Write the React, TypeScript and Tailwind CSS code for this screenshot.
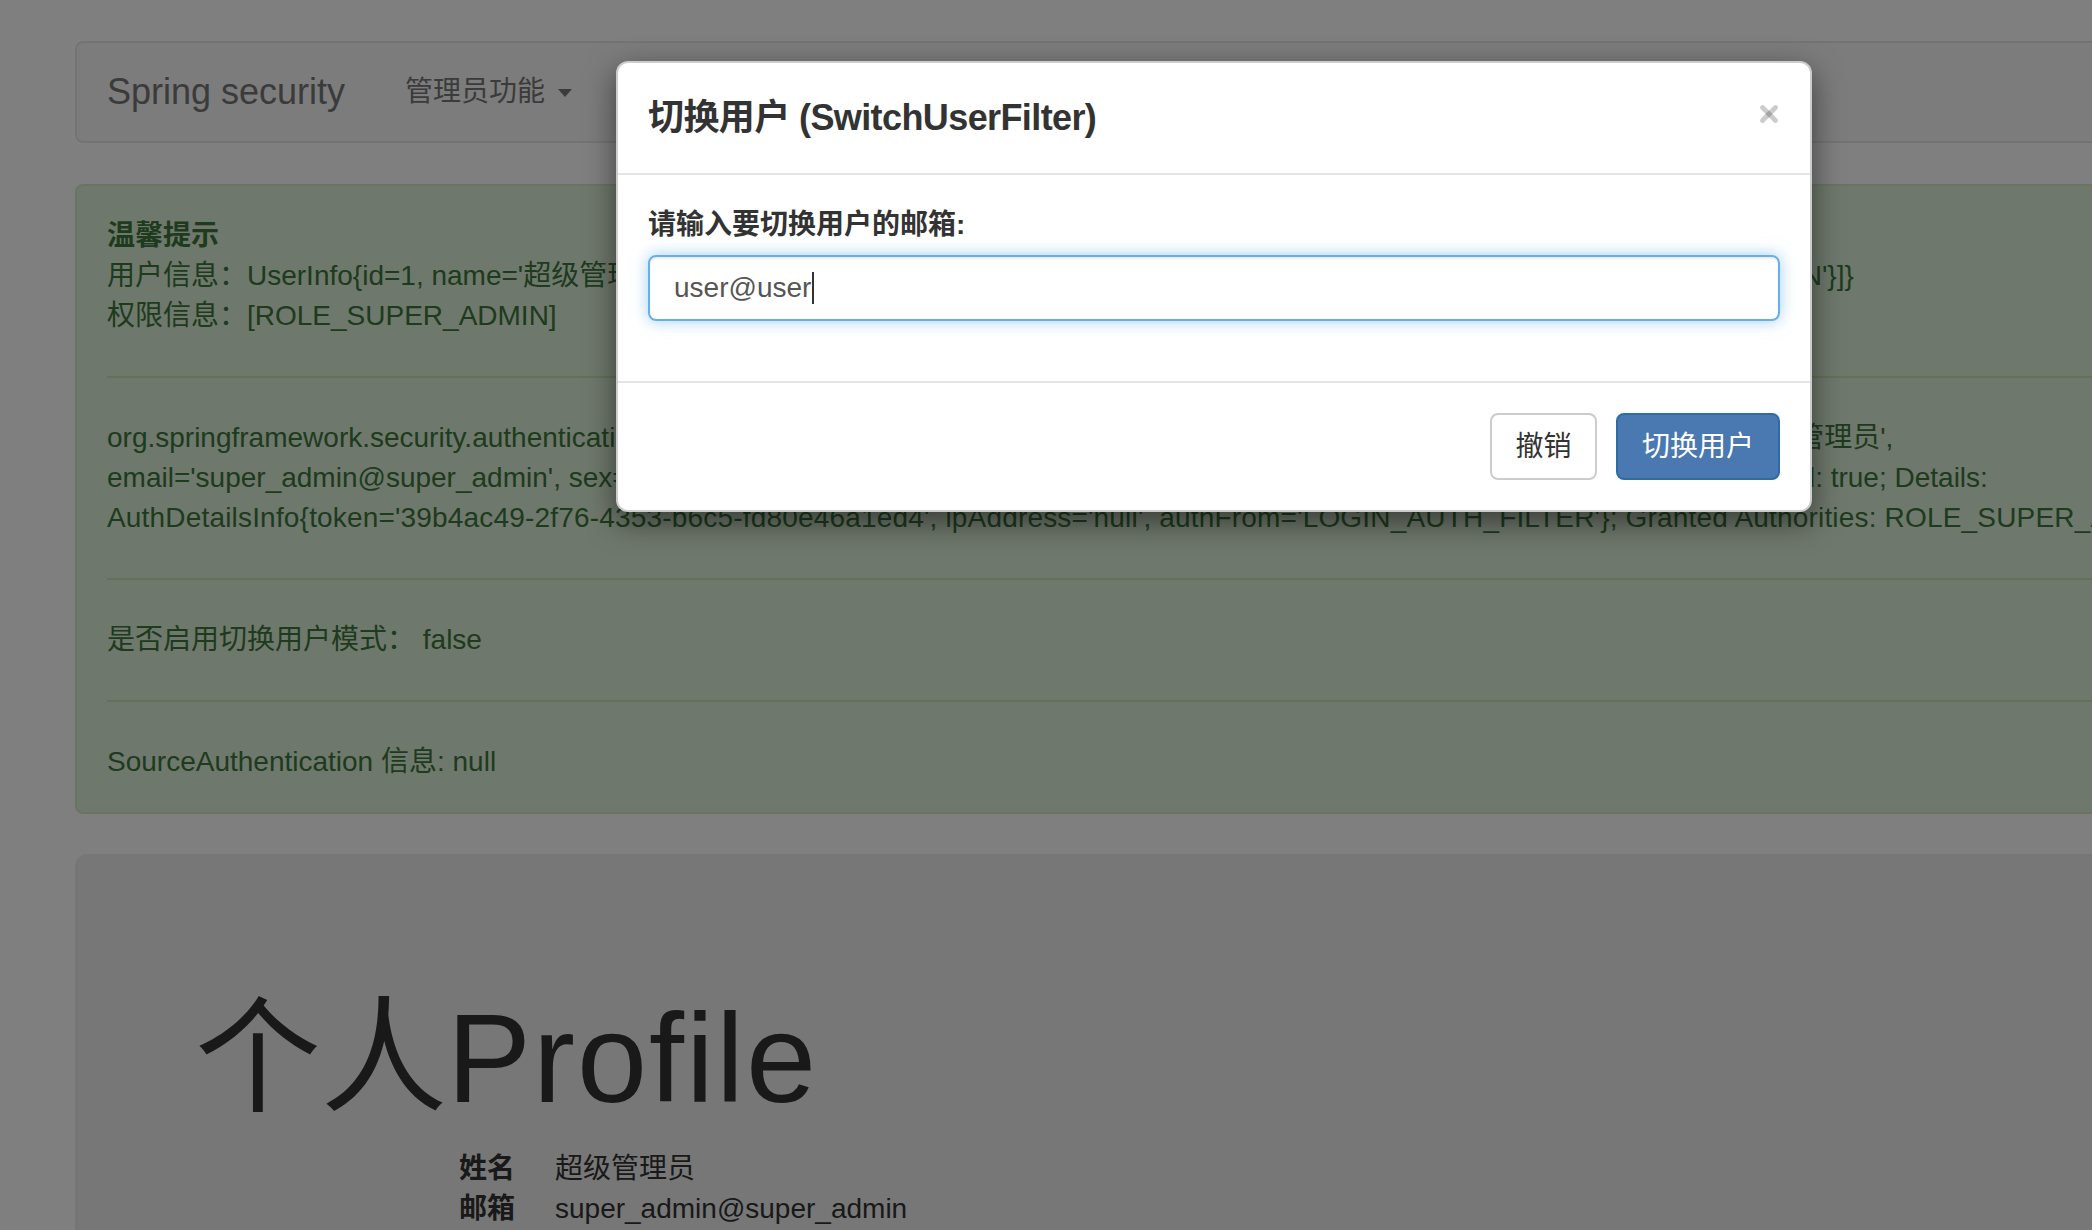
import { X } from "lucide-react"

const font = "font-['Liberation_Sans','Noto_Sans_CJK_SC',sans-serif]"

function Navbar() {
  return (
    <nav className="flex items-center h-[102px] mb-[41px] border-2 border-r-0 border-[#e7e7e7] bg-[#f8f8f8] rounded-l-[8px]">
      <span className="px-[30px] text-[36px] text-[#777]">Spring security</span>
      <span className="flex items-center pl-[30px] text-[28px] text-[#777]">
        管理员功能
        <span className="ml-[13px] mt-[2px] w-0 h-0 border-t-[8px] border-x-[7px] border-b-0 border-t-[#777] border-x-transparent" />
      </span>
    </nav>
  )
}

function InfoAlert() {
  return (
    <div className="mb-[40px] p-[30px] border-2 border-[#d6e9c6] bg-[#dff0d8] text-[#3c763d] rounded-[8px] text-[28px] leading-[40px] whitespace-nowrap">
      <div className="font-bold">温馨提示</div>
      <div>用户信息：UserInfo{"{"}id=1, name='超级管理员', email='super_admin@super_admin', sex=1,role=[Role{"{"}id=1, name='ROLE_SUPER_ADMIN'{"}"}]{"}"}</div>
      <div>权限信息：[ROLE_SUPER_ADMIN]</div>
      <hr className="my-[40px] border-0 border-t-2 border-[#c9e2b3]" />
      <div>
        org.springframework.security.authentication.UsernamePasswordAuthenticationToken@96e3b2a1c: Principal: UserInfo{"{"}id=1, name='超级管理员',
        <br />
        email='super_admin@super_admin', sex=1,role=[Role{"{"}id=1,name='ROLE_SUPER_ADMIN'{"}"}]{"}"}; Credentials: [PROTECTED]; Authenticated: true; Details:
        <br />
        <span className="tracking-[0.18px]">
          AuthDetailsInfo{"{"}token='39b4ac49-2f76-4353-b6c5-fd80e46a1ed4', ipAddress='null', authFrom='LOGIN_AUTH_FILTER'{"}"}; Granted Authorities: ROLE_SUPER_ADMIN
        </span>
      </div>
      <hr className="my-[40px] border-0 border-t-2 border-[#c9e2b3]" />
      <div>是否启用切换用户模式： false</div>
      <hr className="my-[40px] border-0 border-t-2 border-[#c9e2b3]" />
      <div>SourceAuthentication 信息: null</div>
    </div>
  )
}

function Profile() {
  return (
    <div className="h-[800px] px-[120px] py-[96px] bg-[#eee] rounded-[12px]">
      <h1 className="mt-[40px] mb-[20px] text-[126px] leading-[1.1]">
        个人<span className="tracking-[2px]">Profile</span>
      </h1>
      <dl className="text-[28px] leading-[40px]">
        <div className="flex">
          <dt className="w-[320px] text-right font-bold">姓名</dt>
          <dd className="ml-[40px]">超级管理员</dd>
        </div>
        <div className="flex">
          <dt className="w-[320px] text-right font-bold">邮箱</dt>
          <dd className="ml-[40px]">super_admin@super_admin</dd>
        </div>
      </dl>
    </div>
  )
}

function SwitchUserModal() {
  return (
    <div className="absolute left-[616px] top-[61px] w-[1196px] bg-white border-2 border-black/20 rounded-[12px] shadow-[0_10px_30px_rgba(0,0,0,0.5)] text-[#333]">
      <div className="flex items-center justify-between p-[30px] border-b-2 border-[#e5e5e5]">
        <h4 className="text-[36px] leading-[50px] font-bold tracking-[-0.6px]">切换用户 (SwitchUserFilter)</h4>
        <button className="-mt-[8px] -mr-[2px] text-black/20">
          <X size={26} strokeWidth={4.5} />
        </button>
      </div>
      <div className="p-[30px]">
        <label className="block mb-[10px] text-[28px] leading-[40px] font-bold">请输入要切换用户的邮箱:</label>
        <div className="flex items-center h-[66px] px-[24px] border-2 border-[#66afe9] rounded-[8px] shadow-[inset_0_2px_2px_rgba(0,0,0,0.075),0_0_16px_rgba(102,175,233,0.6)] text-[28px] text-[#555]">
          user@user
          <span className="ml-[1px] w-[2px] h-[32px] bg-[#333]" />
        </div>
        <div className="h-[30px]" />
      </div>
      <div className="flex justify-end gap-[19px] p-[30px] border-t-2 border-[#e5e5e5]">
        <button className="w-[107px] h-[67px] border-2 border-[#ccc] rounded-[8px] bg-white text-[28px] text-[#333]">撤销</button>
        <button className="w-[164px] h-[67px] border-2 border-[#2e6da4] rounded-[8px] bg-[#4a78b0] text-[28px] text-white">切换用户</button>
      </div>
    </div>
  )
}

export default function App() {
  return (
    <div className={`relative w-[2092px] h-[1230px] overflow-hidden bg-white text-[#333] ${font}`}>
      <div className="w-[2400px] pl-[75px] pt-[41px]">
        <Navbar />
        <InfoAlert />
        <Profile />
      </div>
      <div className="absolute inset-0 bg-black/50" />
      <SwitchUserModal />
    </div>
  )
}
